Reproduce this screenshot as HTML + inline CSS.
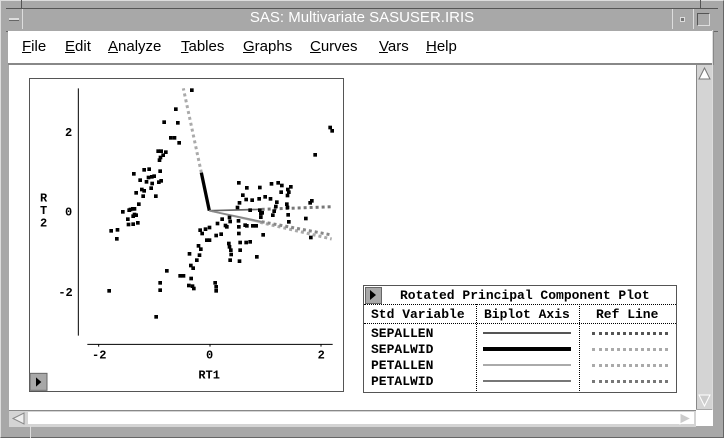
<!DOCTYPE html>
<html><head><style>
body{margin:0;width:724px;height:438px;background:#a8a8a8;position:relative;overflow:hidden;font-family:"Liberation Sans",sans-serif}
.a{position:absolute}
.mono{font-family:"Liberation Mono",monospace;font-weight:bold;font-size:12px;color:#000}
.m{position:absolute;top:38px;font-size:15px;color:#000}
</style></head><body>
<div class="a" style="left:0;top:0;width:724px;height:438px;box-sizing:border-box;border:1px solid #666;border-top-color:#ddd;border-left-color:#ddd"></div>
<div class="a" style="left:21px;top:0;width:1px;height:8px;background:#555"></div>
<div class="a" style="left:700px;top:0;width:1px;height:8px;background:#555"></div>
<!-- title -->
<div class="a" style="left:6px;top:8px;width:712px;height:22px;background:#a8a8a8;border-top:1px solid #555;border-bottom:1px solid #666"></div>
<div class="a" style="left:6px;top:9px;width:16px;height:20px;border-right:1px solid #ddd"></div>
<div class="a" style="left:9px;top:18px;width:10px;height:2px;background:#ddd;border-bottom:1px solid #666"></div>
<div class="a" style="left:0;top:9px;width:724px;text-align:center;color:#fff;font-size:15px">SAS: Multivariate SASUSER.IRIS</div>
<div class="a" style="left:672px;top:9px;width:20px;height:20px;border-left:1px solid #ddd;border-right:1px solid #ddd"></div>
<div class="a" style="left:680px;top:17px;width:3px;height:3px;background:#777;border:1px solid #ddd"></div>
<div class="a" style="left:697px;top:13px;width:11px;height:11px;border:1px solid #555;border-right-color:#ddd;border-bottom-color:#ddd"></div>
<!-- menu -->
<div class="a" style="left:8px;top:31px;width:704px;height:32px;background:#fff;border-right:2px solid #888;border-bottom:2px solid #888"></div>
<div class="m" style="left:22px"><u>F</u>ile</div>
<div class="m" style="left:65px"><u>E</u>dit</div>
<div class="m" style="left:108px"><u>A</u>nalyze</div>
<div class="m" style="left:181px"><u>T</u>ables</div>
<div class="m" style="left:243px"><u>G</u>raphs</div>
<div class="m" style="left:310px"><u>C</u>urves</div>
<div class="m" style="left:379px"><u>V</u>ars</div>
<div class="m" style="left:426px"><u>H</u>elp</div>
<!-- content -->
<div class="a" style="left:9px;top:65px;width:687px;height:345px;background:#fff"></div>
<!-- vscroll -->
<div class="a" style="left:696px;top:65px;width:16px;height:344px;background:#d4d4d4;border-left:1px solid #888"></div>
<div class="a" style="left:712px;top:30px;width:1px;height:380px;background:#ddd"></div>
<svg class="a" style="left:697px;top:66px" width="15" height="16"><polygon points="7.5,2 13,13 2,13" fill="#fff" stroke="#777"/></svg>
<svg class="a" style="left:697px;top:393px" width="15" height="16"><polygon points="2,2 13,2 7.5,13" fill="#ccc" stroke="#fff"/></svg>
<!-- hscroll -->
<div class="a" style="left:9px;top:410px;width:687px;height:16px;background:#d4d4d4;border-top:1px solid #888"></div>
<div class="a" style="left:28px;top:412px;width:666px;height:12px;background:#fff"></div>
<svg class="a" style="left:11px;top:411px" width="16" height="15"><polygon points="2,7.5 13,2 13,13" fill="#eee" stroke="#888"/></svg>
<svg class="a" style="left:678px;top:411px" width="16" height="15"><polygon points="13,7.5 2,2 2,13" fill="#ccc" stroke="#fff"/></svg>
<div class="a" style="left:696px;top:410px;width:17px;height:16px;background:#fff"></div>
<div class="a" style="left:30px;top:426px;width:1px;height:12px;background:#ddd"></div>
<!-- plot -->
<div class="a" style="left:29px;top:78px;width:313px;height:312px;border:1px solid #555"></div>
<svg class="a" style="left:0;top:70px" width="350" height="330" viewBox="0 0 1050 990">
<g stroke="#000" stroke-width="3"><line x1="235" y1="55" x2="235" y2="797"/><line x1="262" y1="823" x2="998" y2="823"/>
<line x1="296" y1="823" x2="296" y2="830"/><line x1="630" y1="823" x2="630" y2="830"/><line x1="963" y1="823" x2="963" y2="830"/></g>
<g font-family="Liberation Mono,monospace" font-weight="bold" font-size="36" fill="#000">
<text x="195" y="198">2</text><text x="195" y="436">0</text><text x="175" y="678">-2</text>
<text x="276" y="866">-2</text><text x="618" y="866">0</text><text x="953" y="866">2</text>
<text x="595" y="925">RT1</text>
<text x="120" y="395">R</text><text x="120" y="432">T</text><text x="120" y="470">2</text></g>
<g stroke-width="9" stroke-dasharray="9,9" fill="none">
<line x1="604" y1="308" x2="550" y2="55" stroke="#aaa"/>
<line x1="785" y1="418" x2="1000" y2="410" stroke="#777"/>
<line x1="780" y1="457" x2="995" y2="507" stroke="#aaa"/>
<line x1="785" y1="455" x2="995" y2="495" stroke="#888"/></g>
<line x1="628" y1="422" x2="604" y2="308" stroke="#000" stroke-width="10"/>
<line x1="628" y1="422" x2="785" y2="418" stroke="#666" stroke-width="5"/>
<line x1="628" y1="422" x2="780" y2="457" stroke="#aaa" stroke-width="5"/>
<line x1="628" y1="422" x2="785" y2="455" stroke="#888" stroke-width="5"/>
<g fill="#000" id="pts"></g>
<rect x="90" y="910" width="51" height="51" fill="#a8a8a8" stroke="#666" stroke-width="3"/>
<polygon points="108,922 108,950 124,936" fill="#000"/>
</svg>
<!-- legend -->
<div class="a" style="left:363px;top:285px;width:312px;height:106px;border:1px solid #555;background:#fff"></div>
<div class="a" style="left:365px;top:287px;width:15px;height:15px;background:#a8a8a8;border:1px solid #666"></div>
<svg class="a" style="left:369px;top:289px" width="10" height="12"><polygon points="1,1 1,11 7,6" fill="#000"/></svg>
<div class="a mono" style="left:400px;top:288px;font-size:13px">Rotated Principal Component Plot</div>
<div class="a" style="left:364px;top:304px;width:312px;border-top:1px dotted #000"></div>
<div class="a" style="left:364px;top:323px;width:312px;border-top:1px dotted #000"></div>
<div class="a" style="left:476px;top:304px;height:87px;border-left:1px dotted #000"></div>
<div class="a" style="left:579px;top:304px;height:87px;border-left:1px dotted #000"></div>
<div class="a mono" style="left:371px;top:307px;font-size:13px">Std Variable</div>
<div class="a mono" style="left:484px;top:307px;font-size:13px">Biplot Axis</div>
<div class="a mono" style="left:596px;top:307px;font-size:13px">Ref Line</div>
<div class="a mono" style="left:371px;top:326px;line-height:16px;font-size:13px">SEPALLEN<br>SEPALWID<br>PETALLEN<br>PETALWID</div>
<div class="a" style="left:483px;top:332px;width:88px;height:2px;background:#555"></div>
<div class="a" style="left:483px;top:347px;width:88px;height:4px;background:#000"></div>
<div class="a" style="left:483px;top:364px;width:88px;height:2px;background:#aaa"></div>
<div class="a" style="left:483px;top:380px;width:88px;height:2px;background:#777"></div>
<div class="a" style="left:592px;top:332px;width:76px;border-top:3px dotted #555"></div>
<div class="a" style="left:592px;top:348px;width:76px;border-top:3px dotted #aaa"></div>
<div class="a" style="left:592px;top:364px;width:76px;border-top:3px dotted #aaa"></div>
<div class="a" style="left:592px;top:380px;width:76px;border-top:3px dotted #777"></div>
<script>
var p=[575,60,527,117,492,156,533,158,512,203,523,203,537,218,474,243,483,243,497,246,489,255,481,262,478,270,401,311,432,299,447,297,480,303,445,322,455,320,462,318,420,330,439,335,456,340,483,332,476,336,425,358,432,362,408,368,453,354,467,378,429,378,416,402,387,420,391,418,398,416,403,416,368,425,403,433,383,447,399,438,408,435,413,458,385,463,399,462,333,482,352,479,350,506,327,662,468,740,480,638,480,660,500,602,540,617,550,617,573,625,577,648,566,646,581,655,568,551,572,586,579,594,590,570,595,527,602,537,598,555,600,480,606,490,620,510,628,510,616,477,628,472,645,638,648,650,648,662,648,496,663,492,652,460,666,447,676,466,680,470,690,454,688,442,686,520,688,530,692,540,693,553,690,570,720,517,720,540,718,573,716,490,716,470,715,452,712,412,718,398,716,338,728,375,740,353,735,465,740,467,738,517,750,515,738,388,756,390,750,420,768,467,758,467,770,560,779,352,777,386,779,420,782,430,789,494,786,428,795,380,811,386,782,441,814,341,834,338,845,346,843,366,830,396,827,409,822,423,818,435,863,358,866,366,862,376,860,402,862,412,864,434,866,455,872,350,917,445,930,398,935,392,932,502,945,254,990,172,996,182];
var g=document.getElementById('pts'),s='';
for(var i=0;i<p.length;i+=2)s+='<rect x="'+(p[i]-5)+'" y="'+(p[i+1]-5)+'" width="11" height="11"/>';
g.innerHTML=s;
</script>
</body></html>
